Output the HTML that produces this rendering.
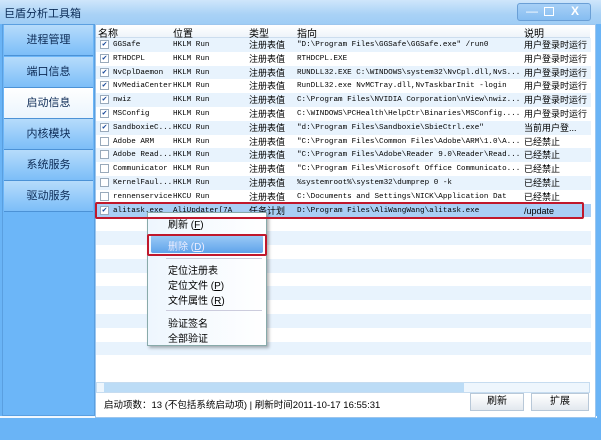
<!DOCTYPE html><html><head><meta charset="utf-8"><style>
*{margin:0;padding:0;box-sizing:border-box}
body{width:601px;height:440px;overflow:hidden;background:#6ab4f6;font-family:"Liberation Sans","Noto Sans CJK SC",sans-serif;font-size:11px;color:#000;position:relative}
.a{position:absolute;white-space:nowrap}
.title{left:0;top:0;width:601px;height:24px;background:linear-gradient(#cfe6fb,#a9d2f6 60%,#9fcdf5)}
.side{left:2px;top:24px;width:93px;height:392px;background:#6cb6f8;border:1px solid #5a9fe0}
.btn{position:absolute;left:1px;width:89px;height:31px;border-bottom:1px solid #4c92d6;background:linear-gradient(#b6dcfb,#7cbef8);text-align:center;line-height:31px;font-size:11px;color:#0c2a55}
.btn.sel{background:linear-gradient(#fff,#eaf4fd)}
.main{left:95px;top:24px;width:501px;height:394px;background:#fff;border:1px solid #9cc6ee}
.row{position:absolute;left:96px;width:495px;height:14px;font-family:"Liberation Mono","Noto Sans CJK SC",monospace;font-size:7.6px;line-height:14px;overflow:hidden;white-space:nowrap}
.row span{position:absolute;top:0;overflow:hidden;white-space:nowrap}
.cb{position:absolute;left:4px;top:2px;width:9px;height:9px;border:1px solid #9ab;background:#fff;font-size:8px;line-height:8px;color:#1a4a9a;text-align:center}
.c{font-family:"Liberation Sans","Noto Sans CJK SC",sans-serif;font-size:10px}
.menu{left:147px;top:212px;width:120px;height:134px;background:linear-gradient(90deg,#eef6fe,#fff);border:1px solid #8aa;box-shadow:2px 2px 3px rgba(0,0,0,.3)}
.mi{position:absolute;left:20px;font-size:10px}
</style></head><body>
<div class="a title"></div>
<div class="a" style="left:4px;top:5px;font-size:11px;color:#0a2a55">巨盾分析工具箱</div>
<div class="a" style="left:517px;top:3px;width:74px;height:18px;border:1px solid #6a9fd6;border-radius:3px;background:linear-gradient(#a7d0f6,#86bdf1);color:#fff;font-size:12px">
<span style="position:absolute;left:8px;top:0">—</span><span style="position:absolute;left:26px;top:3px;width:10px;height:9px;border:1px solid #fff"></span><span style="position:absolute;left:53px;top:0;font-weight:bold">X</span></div>
<div class="a side">
<div class="btn" style="top:0">进程管理</div>
<div class="btn" style="top:32px">端口信息</div>
<div class="btn sel" style="top:63px">启动信息</div>
<div class="btn" style="top:94px">内核模块</div>
<div class="btn" style="top:125px">系统服务</div>
<div class="btn" style="top:156px">驱动服务</div>
</div>
<div class="a" style="left:0;top:416px;width:597px;height:2px;background:#f2f8fe"></div>
<div class="a main"></div>
<div class="a" style="left:96px;top:25px;width:494px;height:13px;background:linear-gradient(#fff,#eef4fa);border-bottom:1px solid #cde"></div>
<div class="a c" style="left:98px;top:25px">名称</div>
<div class="a c" style="left:173px;top:25px">位置</div>
<div class="a c" style="left:249px;top:25px">类型</div>
<div class="a c" style="left:297px;top:25px">指向</div>
<div class="a c" style="left:524px;top:25px">说明</div>
<div id="rows"></div>
<div class="a" style="left:96px;top:382px;width:494px;height:11px;background:#eef6fd;border:1px solid #c6dcf0"></div>
<div class="a" style="left:104px;top:383px;width:360px;height:9px;background:#bcdcf6"></div>
<div class="a c" style="left:104px;top:397px;font-size:9.5px">启动项数：13 (不包括系统启动项) | 刷新时间2011-10-17 16:55:31</div>
<div class="a c" style="left:470px;top:393px;width:54px;height:18px;border:1px solid #b8c8d8;background:linear-gradient(#fff,#e2e8ee);text-align:center;line-height:16px;font-size:10px">刷新</div>
<div class="a c" style="left:531px;top:393px;width:58px;height:18px;border:1px solid #b8c8d8;background:linear-gradient(#fff,#e2e8ee);text-align:center;line-height:16px;font-size:10px">扩展</div>
<div class="a menu">
<div class="mi" style="top:3px">刷新 (<u>F</u>)</div>
<div style="position:absolute;left:3px;top:22px;width:112px;height:18px;background:linear-gradient(#9dcbf6,#5fa3ea);border-radius:2px"></div>
<div class="mi" style="top:25px;color:#eef">删除 (<u>D</u>)</div>
<div style="position:absolute;left:18px;top:45px;width:96px;height:1px;background:#ccd"></div>
<div class="mi" style="top:49px">定位注册表</div>
<div class="mi" style="top:64px">定位文件 (<u>P</u>)</div>
<div class="mi" style="top:79px">文件属性 (<u>R</u>)</div>
<div style="position:absolute;left:18px;top:97px;width:96px;height:1px;background:#ccd"></div>
<div class="mi" style="top:102px">验证签名</div>
<div class="mi" style="top:117px">全部验证</div>
</div>
<div class="a" style="left:95px;top:202px;width:489px;height:17px;border:2px solid #c0182c;border-radius:2px"></div>
<div class="a" style="left:147px;top:234px;width:120px;height:22px;border:2px solid #c0182c;border-radius:2px"></div>
<script>
var d=[["GGSafe","HKLM Run","注册表值","\"D:\\Program Files\\GGSafe\\GGSafe.exe\" /run0","用户登录时运行",1],
["RTHDCPL","HKLM Run","注册表值","RTHDCPL.EXE","用户登录时运行",1],
["NvCplDaemon","HKLM Run","注册表值","RUNDLL32.EXE C:\\WINDOWS\\system32\\NvCpl.dll,NvS...","用户登录时运行",1],
["NvMediaCenter","HKLM Run","注册表值","RunDLL32.exe NvMCTray.dll,NvTaskbarInit -login","用户登录时运行",1],
["nwiz","HKLM Run","注册表值","C:\\Program Files\\NVIDIA Corporation\\nView\\nwiz...","用户登录时运行",1],
["MSConfig","HKLM Run","注册表值","C:\\WINDOWS\\PCHealth\\HelpCtr\\Binaries\\MSConfig....","用户登录时运行",1],
["SandboxieC...","HKCU Run","注册表值","\"d:\\Program Files\\Sandboxie\\SbieCtrl.exe\"","当前用户登...",1],
["Adobe ARM","HKLM Run","注册表值","\"C:\\Program Files\\Common Files\\Adobe\\ARM\\1.0\\A...","已经禁止",0],
["Adobe Read...","HKLM Run","注册表值","\"C:\\Program Files\\Adobe\\Reader 9.0\\Reader\\Read...","已经禁止",0],
["Communicator","HKLM Run","注册表值","\"C:\\Program Files\\Microsoft Office Communicato...","已经禁止",0],
["KernelFaul...","HKLM Run","注册表值","%systemroot%\\system32\\dumprep 0 -k","已经禁止",0],
["rennenservice","HKCU Run","注册表值","C:\\Documents and Settings\\NICK\\Application Dat","已经禁止",0],
["alitask.exe","AliUpdater[7A","任务计划","D:\\Program Files\\AliWangWang\\alitask.exe","/update",1]];
var h="";
for(var i=0;i<24;i++){var y=38+i*13.8;var bg=i==12?"#a9cff5":(i%2?"#ffffff":"#e8f3fd");
h+='<div class="row" style="top:'+y+'px;background:'+bg+'">';
if(i<13){var r=d[i];h+='<div class="cb">'+(r[5]?'✔':'')+'</div><span style="left:17px;width:59px">'+r[0]+'</span><span style="left:77px;width:72px">'+r[1]+'</span><span class="c" style="left:153px;width:46px;font-size:9px">'+r[2]+'</span><span style="left:201px;width:224px">'+r[3]+'</span><span class="c" style="left:428px;width:66px;font-size:9px">'+r[4]+'</span>';}
h+='</div>';}
document.getElementById("rows").innerHTML=h;
</script>
</body></html>
